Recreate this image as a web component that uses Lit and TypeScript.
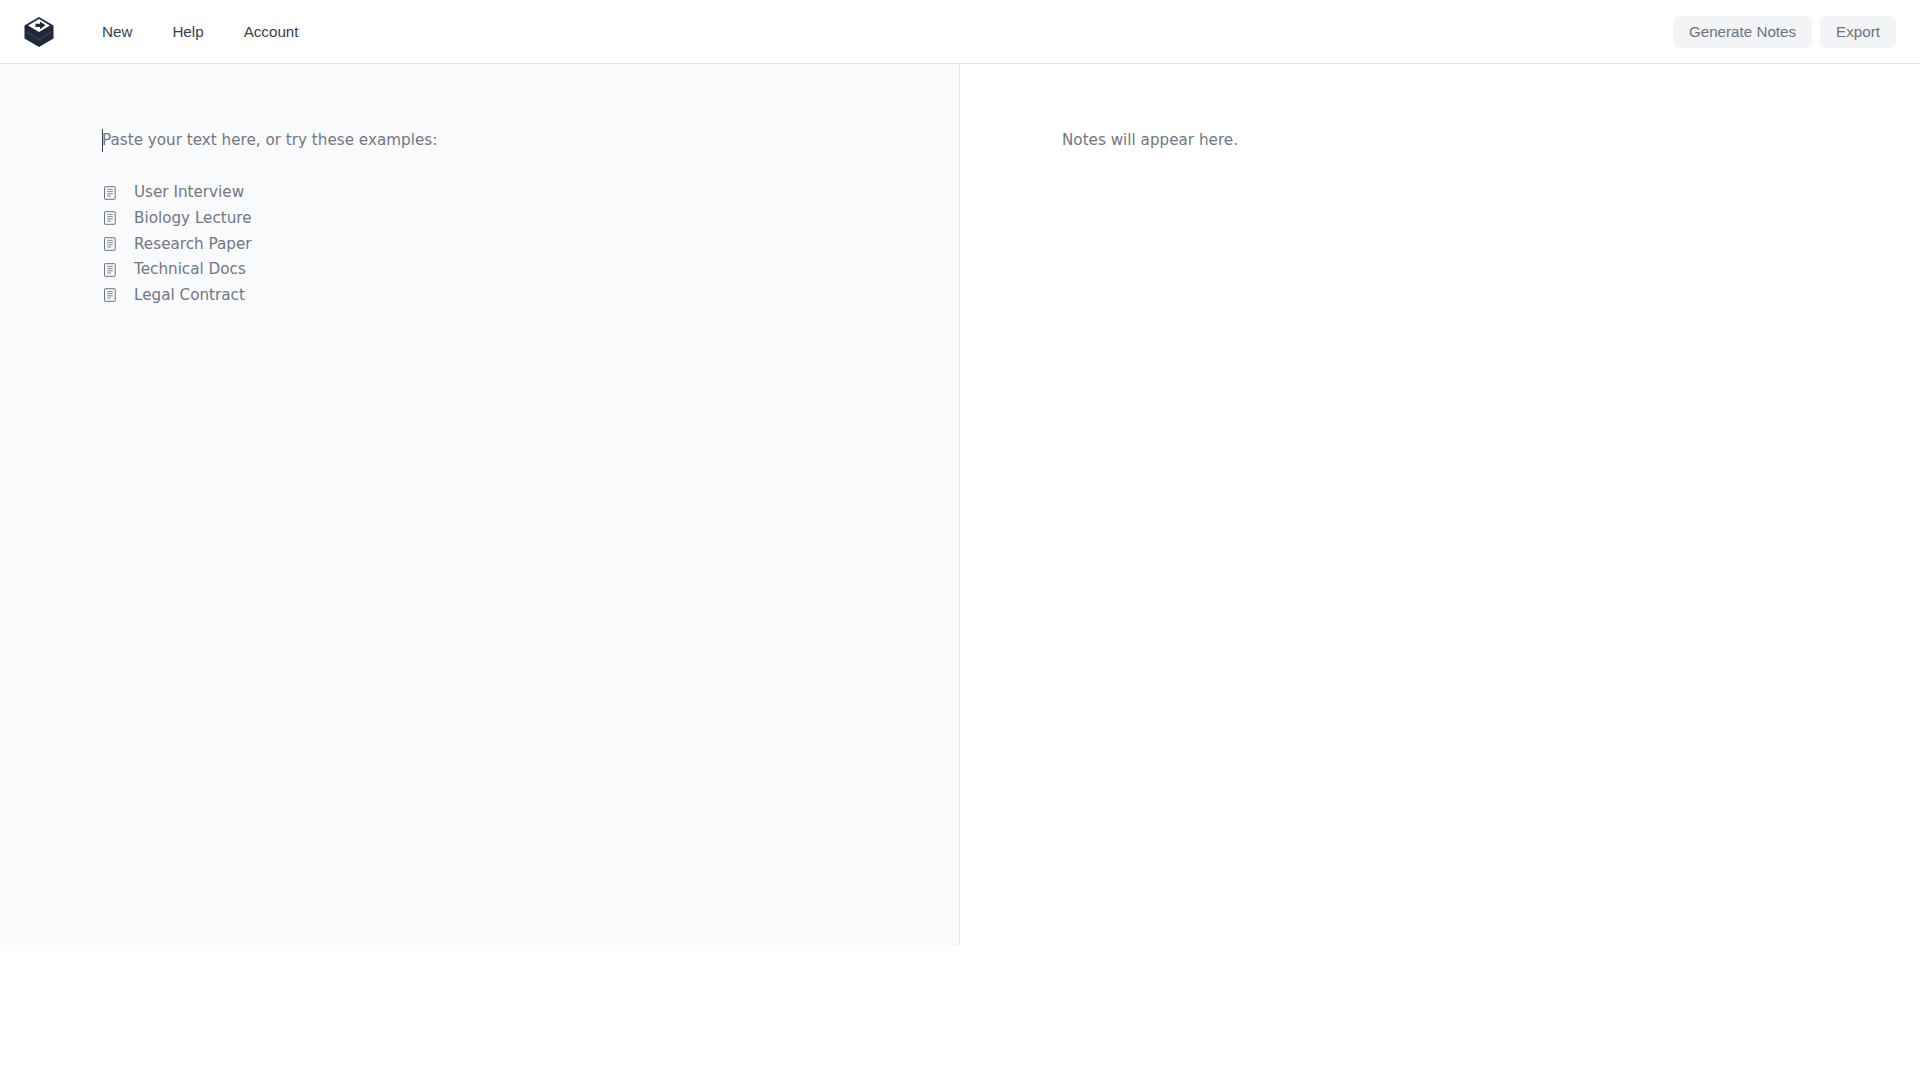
import { LitElement, html, css } from "lit";
import { customElement } from "lit/decorators.js";

const examples = ["User Interview", "Biology Lecture", "Research Paper", "Technical Docs", "Legal Contract"];

@customElement("app-root")
export class AppRoot extends LitElement {
  static styles = css`
    :host { display: block; background: #fff; height: 1080px; font-family: "DejaVu Sans", sans-serif; }
    .top { height: 63px; border-bottom: 1px solid #e5e7eb; display: flex; align-items: center; padding: 0 24px; font-family: "Liberation Sans", sans-serif; }
    .logo { width: 30px; height: 30px; display: block; flex: none; }
    .nav { display: flex; gap: 40px; margin-left: 48px; font-size: 15.2px; color: #374151; }
    .actions { margin-left: auto; display: flex; gap: 8px; }
    .btn { height: 32px; padding: 0 16px; border-radius: 6px; background: #f3f4f6; color: #6b7280; font-size: 15.2px; display: flex; align-items: center; }
    .main { display: flex; height: 881px; }
    .left { width: 960px; box-sizing: border-box; background: #f9fafb; border-right: 1px solid #e5e7eb; padding: 64px 102px; }
    .right { flex: 1; padding: 64px 102px; }
    .intro { position: relative; font-size: 15.2px; line-height: 24px; color: #727782; margin: 0 0 27.6px; height: 24px; white-space: nowrap; width: max-content; }
    .intro::before { content: ""; position: absolute; left: 0; top: 1px; bottom: 0; width: 1px; background: #374151; }
    .note { font-size: 15.2px; line-height: 24px; color: #727782; }
    ul { list-style: none; margin: 0; padding: 0; }
    li { display: flex; align-items: center; height: 25.6px; font-size: 15.2px; color: #727782; gap: 16px; }
    li svg { width: 15px; height: 15px; flex: none; margin-left: 1px; margin-top: 2px; }
  `;

  render() {
    return html`
      <div class="top">
        <svg class="logo" viewBox="0 0 30 30">
          <path fill="#1f2937" d="M15 0 29.5 8.5V21.5L15 30 .5 21.5V8.5Z"/>
          <path fill="#fff" d="M15 2 26 8.5 15 15 4 8.5Z"/>
          <path fill="#1f2937" d="M11.5 6.8H16V4.4L21.5 8.3 16 12.2V10H11.5Z"/>
          <path fill="none" stroke="#4b5563" stroke-width=".8" d="M2.5 15 15 22.5 27.5 15"/>
        </svg>
        <div class="nav"><span>New</span><span>Help</span><span>Account</span></div>
        <div class="actions"><div class="btn">Generate Notes</div><div class="btn">Export</div></div>
      </div>
      <div class="main">
        <div class="left">
          <div class="intro">Paste your text here, or try these examples:</div>
          <ul>
            ${examples.map((e) => html`<li>
              <svg viewBox="0 0 15 15" fill="none" stroke="#6b7280">
                <rect x="1.5" y="0.7" width="10.7" height="12.6" rx=".6" stroke-width="1"/>
                <path stroke-width=".85" d="M4.2 3.4H9.8M4.2 5.6H9.8M4.2 7.8H9.8M4.2 10H8"/>
              </svg><span>${e}</span></li>`)}
          </ul>
        </div>
        <div class="right"><div class="note">Notes will appear here.</div></div>
      </div>
    `;
  }
}
